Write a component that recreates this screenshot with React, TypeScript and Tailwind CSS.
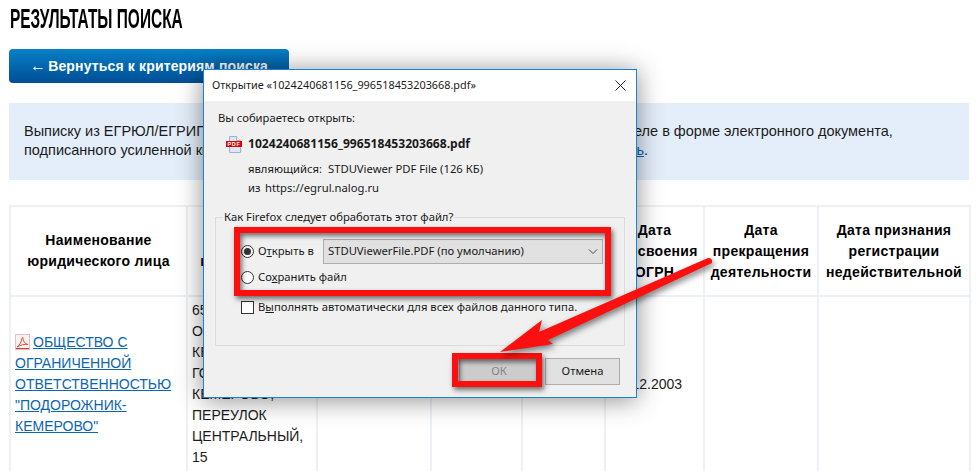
const ARIAL = "font-['Liberation_Sans',Arial,sans-serif]";

const HEADERS = [
  ["Наименование", "юридического лица"],
  ["Адрес", "юридического"],
  ["ИНН"],
  ["КПП"],
  ["ОГРН"],
  ["Дата", "присвоения", "ОГРН"],
  ["Дата", "прекращения", "деятельности"],
  ["Дата признания", "регистрации", "недействительной"],
];

const ADDRESS = ["650000,", "ОБЛАСТЬ", "КЕМЕРОВСКАЯ,", "ГОРОД", "КЕМЕРОВО,", "ПЕРЕУЛОК", "ЦЕНТРАЛЬНЫЙ,", "15"];

function FileIcon() {
  return (
    <svg width="18" height="17" viewBox="0 0 18 17" className="shrink-0">
      <path d="M3.5 0.5H10.5L14.5 4.5V16.5H3.5Z" fill="#dbe7f5" stroke="#9db4d0" />
      <path d="M10.5 0.5V4.5H14.5" fill="#ffffff" stroke="#9db4d0" />
      <rect x="0" y="5" width="16" height="6" fill="#e30000" />
      <text x="8" y="10.2" textAnchor="middle" fontSize="5.5" fontWeight="700" fill="#ffffff" fontFamily="Liberation Sans" letterSpacing="0.6">
        PDF
      </text>
    </svg>
  );
}

function AcrobatIcon() {
  return (
    <svg width="15" height="16" viewBox="0 0 15 16" className="mr-[3px] inline-block align-[-3px]">
      <rect x="0.5" y="0.5" width="14" height="15" fill="#f9f1f0" stroke="#dcc4c2" />
      <path
        d="M2 13C4 12 6 9 7 4.500C7.300 3 8 3 8 4.500C8 7 10 10 13 10.500C10 10 5 11 2 13Z"
        fill="none"
        stroke="#e04a40"
        strokeWidth="1"
      />
      <rect x="1" y="14" width="13" height="1" fill="#d83a30" />
    </svg>
  );
}

function Radio({ checked }: { checked?: boolean }) {
  return (
    <span className="flex h-[13px] w-[13px] shrink-0 items-center justify-center rounded-full border border-[#333333] bg-white">
      {checked && <span className="h-[7px] w-[7px] rounded-full bg-[#333333]" />}
    </span>
  );
}

function Dialog() {
  return (
    <div className="absolute left-[203px] top-[69px] flex h-[329px] w-[434px] flex-col border border-[#1883d7] bg-[#f0f0f0] font-['Noto_Sans',sans-serif] text-[11.25px] text-[#1a1a1a] shadow-[0_2px_24px_rgba(0,0,0,0.45)]">
      <div className="flex h-[31px] shrink-0 items-center justify-between bg-white pl-2 pr-[10px]">
        <span className="text-[10.85px]">Открытие «1024240681156_996518453203668.pdf»</span>
        <svg width="11" height="11" viewBox="0 0 11 11" stroke="#222222" fill="none">
          <path d="M0.500 0.500L10.500 10.500M10.500 0.500L0.500 10.500" />
        </svg>
      </div>

      <div className="flex flex-1 flex-col px-[11px] pt-[9px]">
        <p className="ml-[3px] leading-4">Вы собираетесь открыть:</p>
        <div className="ml-[11px] mt-[10px] flex h-[17px] items-center gap-[4px]">
          <FileIcon />
          <span className="text-[12.1px] font-bold">1024240681156_996518453203668.pdf</span>
        </div>
        <div className="ml-[33px] mt-[8px] flex h-4 items-center">
          <span className="w-[80px]">являющийся:</span>
          <span>STDUViewer PDF File (126 КБ)</span>
        </div>
        <div className="ml-[33px] mt-[3px] flex h-4 items-center">
          <span className="w-[17px]">из</span>
          <span>https://egrul.nalog.ru</span>
        </div>

        <fieldset className="mt-[13px] h-[137px] border border-[#dcdcdc] pl-[25px] pr-[21px]">
          <legend className="-ml-[18px] px-[1px] leading-4">Как Firefox следует обработать этот файл?</legend>
          <div className="mt-[14px] flex h-[25px] items-center">
            <Radio checked />
            <span className="ml-[4px] w-[65px]">
              О<u>т</u>крыть в
            </span>
            <div className="flex h-[25px] flex-1 items-center justify-between border border-[#adadad] bg-[#e1e1e1] pl-[4px] pr-[4px]">
              <span>STDUViewerFile.PDF (по умолчанию)</span>
              <svg width="10" height="6" viewBox="0 0 10 6" fill="none" stroke="#444444">
                <path d="M1 0.500L5 4.500L9 0.500" />
              </svg>
            </div>
          </div>
          <div className="mt-[5px] flex h-4 items-center gap-[4px]">
            <Radio />
            <span>
              Со<u>х</u>ранить файл
            </span>
          </div>
          <div className="mt-[16px] flex h-[13px] items-center gap-[4px]">
            <span className="h-[13px] w-[13px] shrink-0 border border-[#333333] bg-white" />
            <span>
              В<u>ы</u>полнять автоматически для всех файлов данного типа.
            </span>
          </div>
        </fieldset>

        <div className="mt-[12px] flex justify-end gap-[6px] pr-[5px]">
          <button className="h-[27px] w-[80px] border border-[#adadad] bg-[#cccccc] text-[#858585]">ОК</button>
          <button className="h-[27px] w-[75px] border border-[#adadad] bg-[#e1e1e1]">Отмена</button>
        </div>
      </div>
    </div>
  );
}

function Annotations() {
  return (
    <>
      <div className="absolute left-[234px] top-[227px] h-[69px] w-[377px] border-[6px] border-[#fb0f0f] shadow-[2px_3px_5px_rgba(0,0,0,0.55),inset_2px_3px_5px_rgba(0,0,0,0.55)]" />
      <div className="absolute left-[452px] top-[353px] h-[34px] w-[90px] border-[6px] border-[#fb0f0f] shadow-[2px_3px_5px_rgba(0,0,0,0.55),inset_2px_3px_5px_rgba(0,0,0,0.55)]" />
      <svg className="absolute left-0 top-0 h-[471px] w-[976px] drop-shadow-[2px_3px_3px_rgba(0,0,0,0.5)]" viewBox="0 0 976 471">
        <path
          d="M500 352L542 320L539 332L708 258Q713 258 712 263L548 340L553 344Z"
          fill="#fb0f0f"
        />
      </svg>
    </>
  );
}

export default function App() {
  return (
    <div className={`relative h-[471px] w-[976px] overflow-hidden bg-white px-[9px] text-[14px] text-[#1c1c1c] ${ARIAL}`}>
      <h1 className="ml-px h-[49px] origin-left scale-x-[0.572] whitespace-nowrap pt-[4px] text-[27px] font-bold leading-[30px] text-black">
        РЕЗУЛЬТАТЫ ПОИСКА
      </h1>
      <button className="flex h-[34px] w-[280px] items-center justify-center gap-[2px] rounded-[4px] bg-gradient-to-b from-[#0a80c6] to-[#004e96] text-[14px] font-bold tracking-[0.15px] text-white">
        <span className="text-[16px] font-normal">←</span> Вернуться к критериям поиска
      </button>

      <div className="mt-[20px] h-[77px] w-[960px] bg-[#e4eefa] px-[15px] pt-[19px] text-[14.5px] leading-[19px]">
        Выписку из ЕГРЮЛ/ЕГРИП <span className="tracking-[-0.3px]">о конкретном юридическом лице/индивидуальном предприним</span>ателе в форме электронного документа,
        <br />
        подписанного усиленной <span className="tracking-[-0.15px]">квалифицированной электронной подписью, можно будет</span>{" "}
        <a className="text-[#0a66b0] underline">получить</a>.
      </div>

      <table className="mt-[25px] w-[960px] table-fixed border-collapse">
        <colgroup>
          <col className="w-[177px]" />
          <col className="w-[130px]" />
          <col className="w-[114px]" />
          <col className="w-[91px]" />
          <col className="w-[83px]" />
          <col className="w-[99px]" />
          <col className="w-[114px]" />
          <col className="w-[152px]" />
        </colgroup>
        <thead>
          <tr className="h-[90px]">
            {HEADERS.map((lines, i) => (
              <th key={i} className="border-2 border-[#eef1f4] px-1 text-center text-[14px] font-bold leading-[21px] tracking-[0.3px] text-black">
                {lines.map((l) => (
                  <div key={l} className="whitespace-nowrap">
                    {l}
                  </div>
                ))}
              </th>
            ))}
          </tr>
        </thead>
        <tbody>
          <tr>
            <td className="border-2 border-[#eef1f4] px-[4px] leading-[21px]">
              <AcrobatIcon />
              <a className="text-[#0a66b0] underline">
                ОБЩЕСТВО С ОГРАНИЧЕННОЙ ОТВЕТСТВЕННОСТЬЮ "ПОДОРОЖНИК-КЕМЕРОВО"
              </a>
            </td>
            <td className="border-2 border-[#eef1f4] px-[4px] pb-1 pt-[3px] leading-[21px]">
              {ADDRESS.map((l) => (
                <div key={l}>{l}</div>
              ))}
            </td>
            <td className="border-2 border-[#eef1f4]" />
            <td className="border-2 border-[#eef1f4]" />
            <td className="border-2 border-[#eef1f4]" />
            <td className="border-2 border-[#eef1f4] pl-[6px]">27.12.2003</td>
            <td className="border-2 border-[#eef1f4]" />
            <td className="border-2 border-[#eef1f4]" />
          </tr>
        </tbody>
      </table>

      <Dialog />
      <Annotations />
    </div>
  );
}
